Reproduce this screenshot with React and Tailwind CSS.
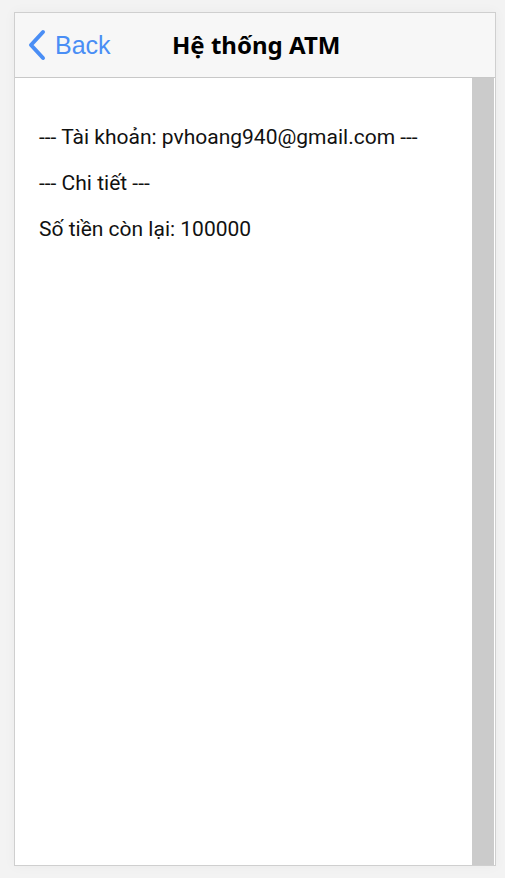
export default function App() {
  return (
    <div className="w-[505px] h-[878px] bg-[#f3f3f3] pt-[12px] pl-[14px]">
      <div className="w-[482px] h-[854px] border border-[#cfcfcf] bg-white flex flex-col shadow-[0_0_12px_rgba(0,0,0,0.04)]">
        <div className="h-[65px] bg-[#f7f7f7] border-b border-[#c8c8c8] flex items-center relative shrink-0">
          <div className="flex items-center pl-[12px] text-[#4a8ef5]" style={{ fontFamily: '"Liberation Sans", Arial, sans-serif' }}>
            <svg width="20" height="32" viewBox="0 0 20 32" className="mr-[8px]">
              <path d="M16 3 L4 16 L16 29" fill="none" stroke="#4a8ef5" strokeWidth="4" strokeLinecap="round" strokeLinejoin="round" />
            </svg>
            <span className="text-[25px] leading-none">Back</span>
          </div>
          <div className="absolute left-[157px] top-0 h-full flex items-center text-[24px] font-bold text-black" style={{ fontFamily: '"Noto Sans", "Open Sans", sans-serif' }}>
            Hệ thống ATM
          </div>
        </div>
        <div className="flex-1 flex min-h-0">
          <div className="flex-1 pl-[24px] pt-[45px] text-[21px] text-[#111] flex flex-col gap-[18px]" style={{ fontFamily: 'Roboto, sans-serif' }}>
            <div className="leading-[28px]">--- Tài khoản: pvhoang940@gmail.com ---</div>
            <div className="leading-[28px]">--- Chi tiết ---</div>
            <div className="leading-[28px]">Số tiền còn lại: 100000</div>
          </div>
          <div className="w-[22px] bg-[#cbcbcb] mr-[1px] shrink-0"></div>
        </div>
      </div>
    </div>
  );
}
